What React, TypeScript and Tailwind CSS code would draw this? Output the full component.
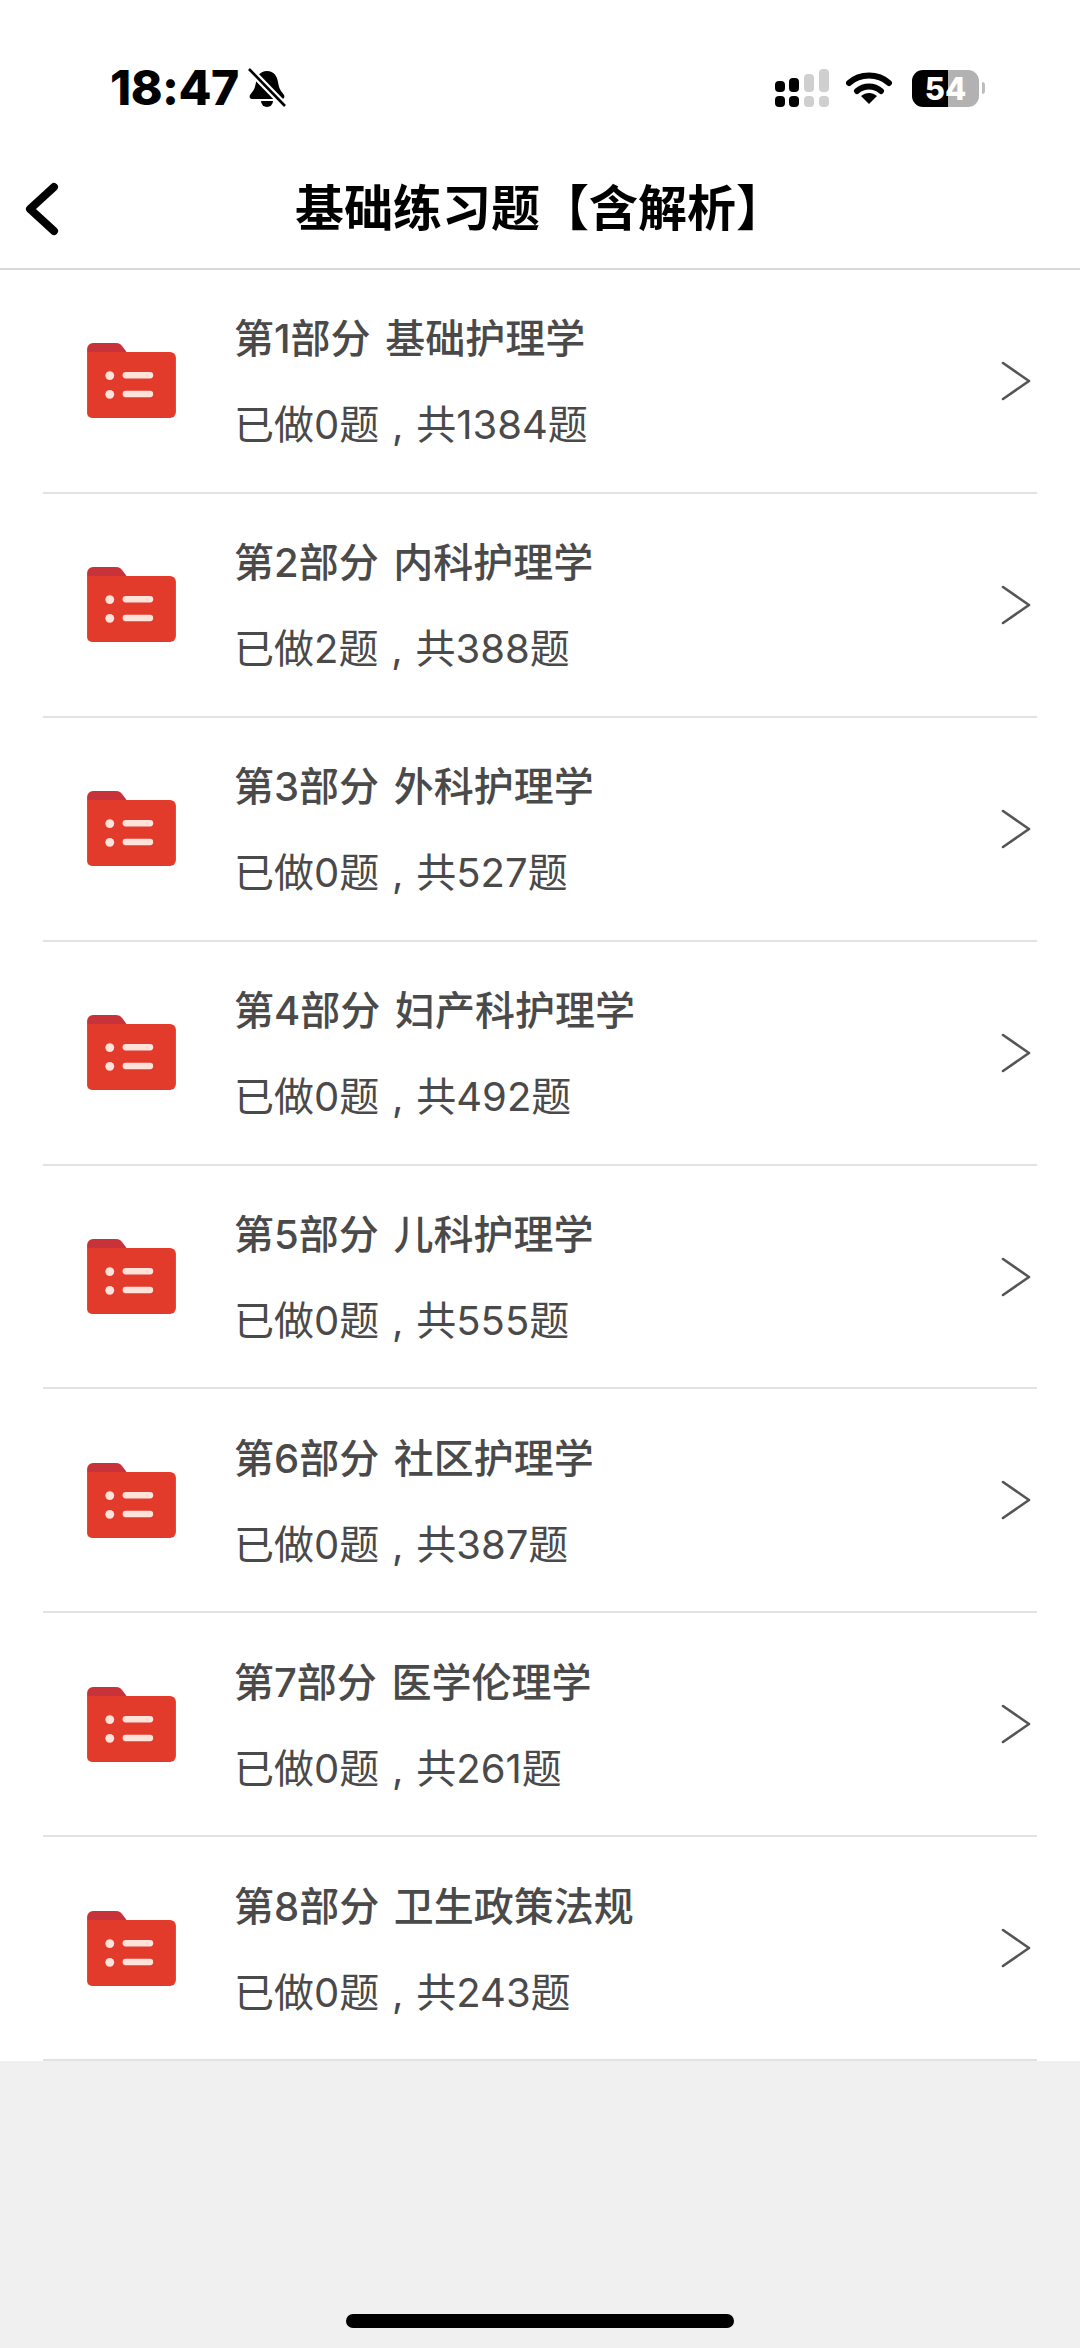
import React from 'react';

const parts = [
  { title: '第1部分 基础护理学', done: 0, total: 1384 },
  { title: '第2部分 内科护理学', done: 2, total: 388 },
  { title: '第3部分 外科护理学', done: 0, total: 527 },
  { title: '第4部分 妇产科护理学', done: 0, total: 492 },
  { title: '第5部分 儿科护理学', done: 0, total: 555 },
  { title: '第6部分 社区护理学', done: 0, total: 387 },
  { title: '第7部分 医学伦理学', done: 0, total: 261 },
  { title: '第8部分 卫生政策法规', done: 0, total: 243 },
];

const FolderIcon = () => (
  <svg width="89" height="75" viewBox="0 0 90 76" className="shrink-0">
    <path d="M0 6a6 6 0 0 1 6-6h23c4 0 6 2 8 5l3 4H0z" fill="#c8323a" />
    <path d="M0 9h84a6 6 0 0 1 6 6v55a6 6 0 0 1-6 6H5a5 5 0 0 1-5-5z" fill="#e23a2b" />
    <circle cx="23" cy="33" r="4.5" fill="#fde3da" />
    <circle cx="23" cy="52" r="4.5" fill="#fde3da" />
    <rect x="36" y="29.5" width="31" height="6.5" rx="3.2" fill="#fde3da" />
    <rect x="36" y="48.5" width="31" height="6.5" rx="3.2" fill="#fde3da" />
  </svg>
);

const Chevron = () => (
  <svg width="32" height="42" viewBox="0 0 32 42" fill="none" className="shrink-0">
    <path d="M3 3l26 18L3 39" stroke="#555" strokeWidth="2.6" strokeLinecap="round" strokeLinejoin="round" />
  </svg>
);

const BellSlash = () => (
  <svg width="38" height="40" viewBox="0 0 38 40" className="ml-[9px]">
    <path d="M19 3c7 0 10 5 11 11 1 7 3 9 6 13 1 2 0 4-2 4H4c-2 0-3-2-2-4 3-4 5-6 6-13 1-6 4-11 11-11z" fill="#000" />
    <path d="M13 33h12a6 6 0 0 1-12 0z" fill="#000" />
    <path d="M1 1l36 37" stroke="#fff" strokeWidth="7" />
    <path d="M1 1l36 37" stroke="#000" strokeWidth="2.6" />
  </svg>
);

const Signal = () => (
  <svg width="54" height="38" viewBox="0 0 54 38" className="mr-[-3px]">
    <rect x="0" y="12" width="10" height="11" rx="4" fill="#000" />
    <rect x="0" y="27" width="10" height="11" rx="4" fill="#000" />
    <rect x="14" y="9" width="10" height="14" rx="4" fill="#000" />
    <rect x="14" y="27" width="10" height="11" rx="4" fill="#000" />
    <rect x="29" y="5" width="10" height="18" rx="4" fill="#cfcfcf" />
    <rect x="29" y="27" width="10" height="11" rx="4" fill="#cfcfcf" />
    <rect x="44" y="0" width="10" height="23" rx="4" fill="#cfcfcf" />
    <rect x="44" y="27" width="10" height="11" rx="4" fill="#cfcfcf" />
  </svg>
);

const Wifi = () => (
  <svg width="46" height="34" viewBox="0 0 46 34" fill="none">
    <path d="M3 12c11-10 29-10 40 0" stroke="#000" strokeWidth="6" strokeLinecap="round" />
    <path d="M11 20c7-6 17-6 24 0" stroke="#000" strokeWidth="6" strokeLinecap="round" />
    <path d="M15 25c5-4 11-4 16 0l-8 8z" fill="#000" />
  </svg>
);

const Battery = () => (
  <div className="flex items-center">
    <div className="flex h-[37px] w-[67px] items-center justify-center rounded-[11px] bg-[linear-gradient(90deg,#000_0,#000_36px,#b2b2b2_36px,#b2b2b2_100%)] font-['Inter'] text-[31px] leading-none font-extrabold text-white">
      54
    </div>
    <div className="ml-[3px] h-[12px] w-[3px] rounded-r-full bg-[#bdbdbd]" />
  </div>
);

export default function App() {
  return (
    <div className="flex min-h-[2348px] flex-col bg-[#f0f0f0] font-['Inter','Noto_Sans_CJK_SC',sans-serif]">
      <div className="bg-white">
        <div className="flex h-[150px] items-center justify-between pr-[95px] pl-[110px]">
          <div className="flex items-center pt-[26px]">
            <span className="text-[48px] leading-none font-extrabold tracking-[-0.5px] text-black">18:47</span>
            <BellSlash />
          </div>
          <div className="flex items-center gap-[20px] pt-[26px]">
            <Signal />
            <Wifi />
            <Battery />
          </div>
        </div>
        <div className="grid h-[120px] grid-cols-[1fr_auto_1fr] items-center border-b-2 border-[#d9d9d9]">
          <div className="pl-[25px]">
            <svg width="34" height="54" viewBox="0 0 34 54" fill="none">
              <path d="M29 5L5 27l24 22" stroke="#000" strokeWidth="8" strokeLinecap="round" strokeLinejoin="round" />
            </svg>
          </div>
          <h1 className="text-[49px] font-bold text-black">基础练习题【含解析】</h1>
          <div />
        </div>
      </div>

      <div className="bg-white">
        {parts.map((p) => (
          <div key={p.title} className="px-[43px]">
            <div className="flex h-[223.9px] items-center border-b-2 border-[#e2e2e2] pr-[5px] pl-[44px]">
              <FolderIcon />
              <div className="ml-[58px] flex flex-1 flex-col gap-[36px] pt-[3px] text-[#4a4a4a]">
                <div className="text-[40px] leading-[50px] font-medium [word-spacing:4px]">{p.title}</div>
                <div className="text-[40px] leading-[50px] [word-spacing:1.5px]">
                  已做{p.done}题 , 共{p.total}题
                </div>
              </div>
              <Chevron />
            </div>
          </div>
        ))}
      </div>

      <div className="mt-auto flex justify-center pb-[20px]">
        <div className="h-[14px] w-[388px] rounded-full bg-black" />
      </div>
    </div>
  );
}
